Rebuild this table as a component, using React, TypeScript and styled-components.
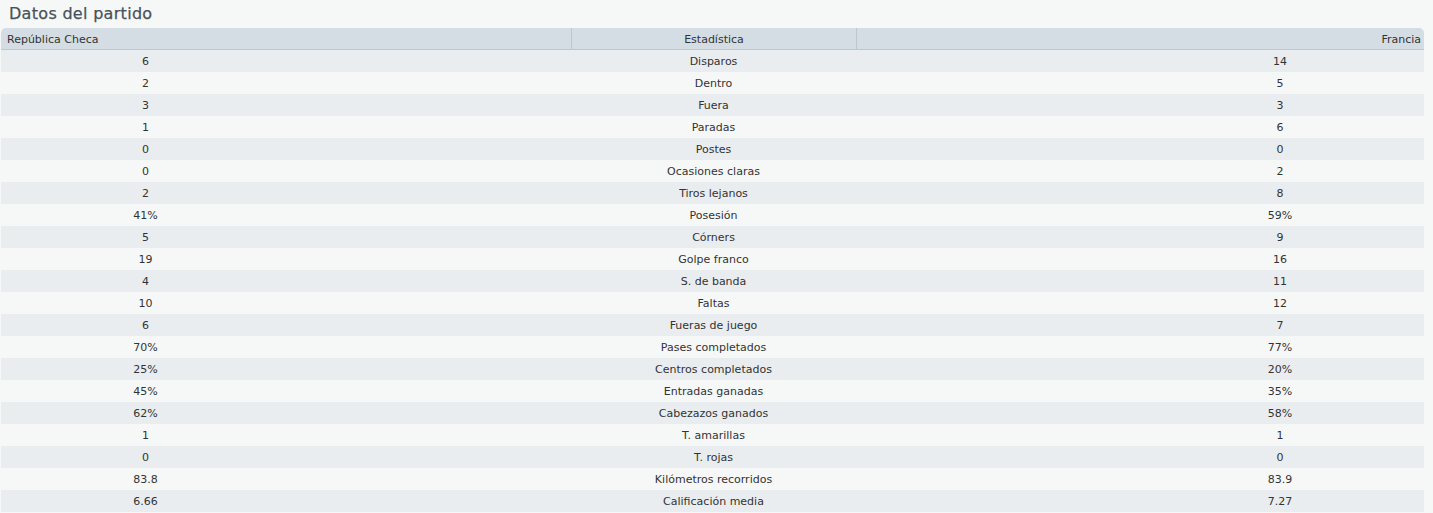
import React from "react";
import styled, { createGlobalStyle } from "styled-components";

const Global = createGlobalStyle`
  html, body { margin: 0; padding: 0; background: #f6f8f8; }
  body { font-family: "DejaVu Sans", Verdana, sans-serif; }
`;

const Page = styled.div`
  width: 1433px;
  height: 513px;
  background: #f6f8f8;
  overflow: hidden;
`;

const Title = styled.h2`
  margin: 0;
  height: 28px;
  padding: 3px 0 0 9px;
  box-sizing: border-box;
  font-size: 16px;
  line-height: 21px;
  font-weight: 400;
  color: #48525c;
  letter-spacing: 0.3px;
  -webkit-text-stroke: 0.25px #48525c;
`;

const Table = styled.div`
  margin-left: 1px;
  width: 1423px;
  font-size: 11px;
  color: #333;
`;

const Header = styled.div`
  display: grid;
  grid-template-columns: 570px 285px 568px;
  height: 22px;
  background: #d4dde3;
  border-bottom: 1px solid #bcc8cf;
  border-radius: 5px 5px 0 0;
  box-sizing: border-box;
`;

const HeadCell = styled.div<{ $align: "left" | "center" | "right"; $divider?: boolean }>`
  display: flex;
  align-items: center;
  justify-content: ${(p) =>
    p.$align === "left" ? "flex-start" : p.$align === "right" ? "flex-end" : "center"};
  padding: 2px ${(p) => (p.$align === "right" ? "3px" : "0")} 0 ${(p) => (p.$align === "left" ? "6px" : "0")};
  border-left: ${(p) => (p.$divider ? "1px solid #bcc7ce" : "none")};
  line-height: 19px;
  color: #333;
`;

const Row = styled.div<{ $odd: boolean }>`
  display: grid;
  grid-template-columns: 289px 281px 285px 280px 288px;
  height: 22px;
  background: ${(p) => (p.$odd ? "#e9edf0" : "#f6f8f8")};
`;

const Cell = styled.div`
  display: flex;
  align-items: center;
  justify-content: center;
  padding-top: 1px;
  line-height: 21px;
  white-space: nowrap;
`;

const stats: [string, string, string][] = [
  ["6", "Disparos", "14"],
  ["2", "Dentro", "5"],
  ["3", "Fuera", "3"],
  ["1", "Paradas", "6"],
  ["0", "Postes", "0"],
  ["0", "Ocasiones claras", "2"],
  ["2", "Tiros lejanos", "8"],
  ["41%", "Posesión", "59%"],
  ["5", "Córners", "9"],
  ["19", "Golpe franco", "16"],
  ["4", "S. de banda", "11"],
  ["10", "Faltas", "12"],
  ["6", "Fueras de juego", "7"],
  ["70%", "Pases completados", "77%"],
  ["25%", "Centros completados", "20%"],
  ["45%", "Entradas ganadas", "35%"],
  ["62%", "Cabezazos ganados", "58%"],
  ["1", "T. amarillas", "1"],
  ["0", "T. rojas", "0"],
  ["83.8", "Kilómetros recorridos", "83.9"],
  ["6.66", "Calificación media", "7.27"],
];

export default function App() {
  return (
    <Page>
      <Global />
      <Title>Datos del partido</Title>
      <Table>
        <Header>
          <HeadCell $align="left">República Checa</HeadCell>
          <HeadCell $align="center" $divider>Estadística</HeadCell>
          <HeadCell $align="right" $divider>Francia</HeadCell>
        </Header>
        {stats.map(([a, name, b], i) => (
          <Row key={name} $odd={i % 2 === 0}>
            <Cell>{a}</Cell>
            <Cell />
            <Cell>{name}</Cell>
            <Cell />
            <Cell>{b}</Cell>
          </Row>
        ))}
      </Table>
    </Page>
  );
}
